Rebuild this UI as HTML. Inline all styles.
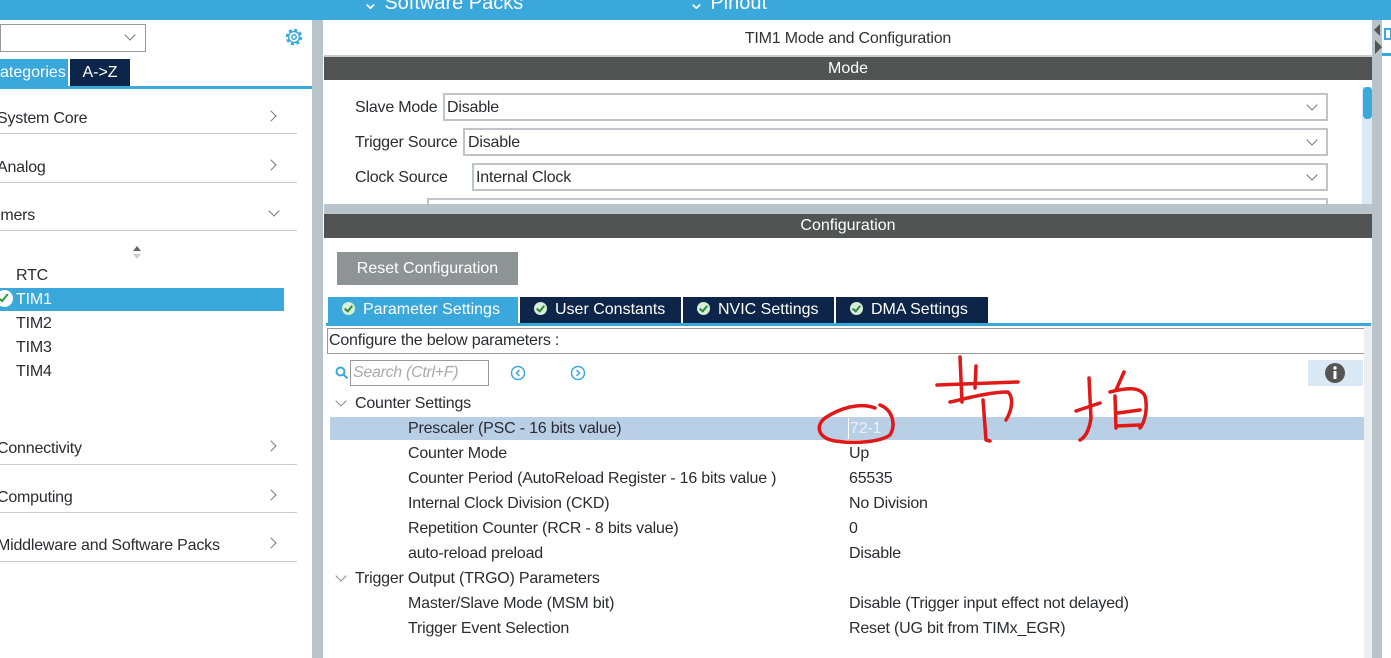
<!DOCTYPE html>
<html><head><meta charset="utf-8"><style>
*{margin:0;padding:0;box-sizing:border-box}
body{width:1391px;height:658px;overflow:hidden;background:#fff;font-family:"Liberation Sans","Noto Sans CJK SC",sans-serif;font-size:16px;color:#2b2b33;position:relative}
.a{position:absolute;white-space:nowrap}
.t{position:absolute;white-space:nowrap;line-height:18px;letter-spacing:-0.2px}
.sel{position:absolute;border:2px solid #c0c4c8;background:#fff;height:28px}
.hline{position:absolute;height:1px;background:#c8ccd0}
.chev{position:absolute;width:8px;height:8px;border-right:1.5px solid #777;border-bottom:1.5px solid #777}
.tab{position:absolute;top:297px;height:26px;background:#0c2548;color:#fff;line-height:26px;font-size:16px}
.ck{display:inline-block;width:13px;height:13px;border-radius:50%;background:#d8eed8;vertical-align:-1px;margin:0 8px 0 14px;position:relative}
.ck:after{content:"";position:absolute;left:4px;top:2px;width:3px;height:6px;border-right:2px solid #2a8a3a;border-bottom:2px solid #2a8a3a;transform:rotate(40deg)}
</style></head><body>
<!-- top bar -->
<div class="a" style="left:0;top:0;width:1391px;height:20px;background:#3aa8db"></div>
<div class="a" style="left:362px;top:-9px;color:#fff;font-size:20px;line-height:24px">⌄ Software Packs</div>
<div class="a" style="left:688px;top:-9px;color:#fff;font-size:20px;line-height:24px">⌄ Pinout</div>

<!-- left panel -->
<div class="a" style="left:0;top:24px;width:146px;height:28px;border:1px solid #999;background:#fff"></div>
<div class="chev" style="left:126px;top:31px;transform:rotate(45deg)"></div>
<svg class="a" style="left:284px;top:27px" width="20" height="20" viewBox="0 0 20 20"><circle cx="10" cy="10" r="7" fill="none" stroke="#3aa8db" stroke-width="2.5" stroke-dasharray="3 2.5"/><circle cx="10" cy="10" r="5.5" fill="none" stroke="#3aa8db" stroke-width="1.5"/><circle cx="10" cy="10" r="2.2" fill="none" stroke="#3aa8db" stroke-width="1.5"/></svg>
<div class="a" style="left:0;top:59px;width:68px;height:28px;background:#3aa8db;color:#fff;line-height:28px;font-size:16px">ategories</div>
<div class="a" style="left:70px;top:59px;width:60px;height:28px;background:#0c2548;color:#fff;line-height:28px;text-align:center;font-size:16px">A-&gt;Z</div>
<div class="a" style="left:0;top:86px;width:312px;height:3px;background:#3aa8db"></div>

<div class="t" style="left:-3px;top:110px">System Core</div><div class="chev" style="left:267px;top:112px;transform:rotate(-45deg)"></div><div class="hline" style="left:0;top:133px;width:297px"></div>
<div class="t" style="left:-3px;top:159px">Analog</div><div class="chev" style="left:267px;top:161px;transform:rotate(-45deg)"></div><div class="hline" style="left:0;top:182px;width:297px"></div>
<div class="t" style="left:-3px;top:207px">imers</div><div class="chev" style="left:270px;top:207px;transform:rotate(45deg)"></div><div class="hline" style="left:0;top:230px;width:297px"></div>
<div class="a" style="left:133px;top:246px;width:0;height:0;border:4px solid transparent;border-bottom:5px solid #666;border-top:0"></div>
<div class="a" style="left:133px;top:254px;width:0;height:0;border:4px solid transparent;border-top:5px solid #ccc;border-bottom:0"></div>
<div class="t" style="left:16px;top:267px">RTC</div>
<div class="a" style="left:0;top:288px;width:284px;height:23px;background:#3aa8db"></div>
<div class="a" style="left:-4px;top:290px;width:17px;height:17px;border-radius:50%;background:#fff"></div>
<div class="a" style="left:1px;top:292px;width:5px;height:10px;border-right:2px solid #2a9a3a;border-bottom:2px solid #2a9a3a;transform:rotate(40deg)"></div>
<div class="t" style="left:16px;top:291px;color:#fff">TIM1</div>
<div class="t" style="left:16px;top:315px">TIM2</div>
<div class="t" style="left:16px;top:339px">TIM3</div>
<div class="t" style="left:16px;top:363px">TIM4</div>
<div class="t" style="left:-3px;top:440px">Connectivity</div><div class="chev" style="left:267px;top:442px;transform:rotate(-45deg)"></div><div class="hline" style="left:0;top:464px;width:297px"></div>
<div class="t" style="left:-3px;top:489px">Computing</div><div class="chev" style="left:267px;top:491px;transform:rotate(-45deg)"></div><div class="hline" style="left:0;top:512px;width:297px"></div>
<div class="t" style="left:-3px;top:537px">Middleware and Software Packs</div><div class="chev" style="left:267px;top:539px;transform:rotate(-45deg)"></div><div class="hline" style="left:0;top:561px;width:297px"></div>

<!-- separator -->
<div class="a" style="left:312px;top:20px;width:11px;height:638px;background:#b9c4ca"></div>
<div class="a" style="left:1372px;top:20px;width:10px;height:638px;background:#b9c4ca"></div>
<div class="a" style="left:1374px;top:24px;width:0;height:0;border:6px solid transparent;border-right:6px solid #555;border-left:0"></div>
<div class="a" style="left:1375px;top:40px;width:0;height:0;border:7px solid transparent;border-left:7px solid #555;border-right:0"></div>
<div class="a" style="left:1384px;top:28px;width:8px;height:12px;border:2px solid #3aa8db"></div>
<div class="a" style="left:1382px;top:53px;width:9px;height:3px;background:#3aa8db"></div>

<!-- mode section -->
<div class="a" style="left:324px;top:30px;width:1048px;text-align:center;font-size:16px;color:#333;line-height:18px;letter-spacing:-0.2px">TIM1 Mode and Configuration</div>
<div class="a" style="left:324px;top:55px;width:1048px;height:2px;background:#ccc"></div>
<div class="a" style="left:324px;top:57px;width:1048px;height:23px;background:#525453;color:#fff;text-align:center;line-height:23px">Mode</div>
<div class="t" style="left:355px;top:99px">Slave Mode</div>
<div class="sel" style="left:443px;top:93px;width:885px"></div><div class="t" style="left:447px;top:99px">Disable</div><div class="chev" style="left:1308px;top:101px;transform:rotate(45deg)"></div>
<div class="t" style="left:355px;top:134px">Trigger Source</div>
<div class="sel" style="left:463px;top:128px;width:865px"></div><div class="t" style="left:468px;top:134px">Disable</div><div class="chev" style="left:1308px;top:136px;transform:rotate(45deg)"></div>
<div class="t" style="left:355px;top:169px">Clock Source</div>
<div class="sel" style="left:472px;top:163px;width:856px"></div><div class="t" style="left:476px;top:169px">Internal Clock</div><div class="chev" style="left:1308px;top:171px;transform:rotate(45deg)"></div>
<div class="sel" style="left:427px;top:198px;width:901px;height:8px;border-bottom:0"></div>
<div class="a" style="left:1362px;top:87px;width:10px;height:117px;background:#dbe8f5"></div>
<div class="a" style="left:1363px;top:87px;width:9px;height:32px;background:#3aa8db;border-radius:4px"></div>

<!-- config -->
<div class="a" style="left:324px;top:204px;width:1048px;height:10px;background:#b9c4ca"></div>
<div class="a" style="left:324px;top:214px;width:1048px;height:24px;background:#525453;color:#fff;text-align:center;line-height:24px">Configuration</div>
<div class="a" style="left:337px;top:252px;width:181px;height:33px;background:#8e9396;color:#fff;text-align:center;line-height:33px">Reset Configuration</div>
<div class="tab" style="left:328px;width:190px;background:#3aa8db"><span class="ck"></span>Parameter Settings</div>
<div class="tab" style="left:520px;width:161px"><span class="ck"></span>User Constants</div>
<div class="tab" style="left:683px;width:151px"><span class="ck"></span>NVIC Settings</div>
<div class="tab" style="left:836px;width:152px"><span class="ck"></span>DMA Settings</div>
<div class="a" style="left:326px;top:323px;width:1045px;height:3px;background:#3aa8db"></div>
<div class="a" style="left:327px;top:328px;width:1042px;height:26px;border:1px solid #999;line-height:24px;padding-left:1px;letter-spacing:-0.2px">Configure the below parameters :</div>
<svg class="a" style="left:335px;top:366px" width="14" height="14"><circle cx="5.5" cy="5.5" r="4" fill="none" stroke="#3aa8db" stroke-width="2"/><line x1="8.5" y1="8.5" x2="12.5" y2="12.5" stroke="#3aa8db" stroke-width="2"/></svg>
<div class="a" style="left:350px;top:360px;width:139px;height:26px;border:1px solid #999;color:#aaa;font-style:italic;line-height:24px;padding-left:2px;letter-spacing:-0.3px">Search (Ctrl+F)</div>
<svg class="a" style="left:510px;top:365px" width="16" height="16"><circle cx="8" cy="8" r="6.5" fill="none" stroke="#3aa8db" stroke-width="1.5"/><path d="M9.5 5 L6.5 8 L9.5 11" fill="none" stroke="#3aa8db" stroke-width="1.5"/></svg>
<svg class="a" style="left:570px;top:365px" width="16" height="16"><circle cx="8" cy="8" r="6.5" fill="none" stroke="#3aa8db" stroke-width="1.5"/><path d="M6.5 5 L9.5 8 L6.5 11" fill="none" stroke="#3aa8db" stroke-width="1.5"/></svg>
<div class="a" style="left:1308px;top:360px;width:55px;height:26px;background:#dbe8f5"></div>
<svg class="a" style="left:1325px;top:363px" width="20" height="20"><circle cx="10" cy="10" r="10" fill="#555"/><rect x="8.5" y="8" width="3" height="8" fill="#fff"/><circle cx="10" cy="5" r="1.7" fill="#fff"/></svg>

<div class="a" style="left:330px;top:417px;width:1034px;height:23px;background:#b8cfe6"></div>
<div class="chev" style="left:337px;top:397px;transform:rotate(45deg);border-color:#888"></div>
<div class="t" style="left:355px;top:395px">Counter Settings</div>
<div class="t" style="left:408px;top:420px">Prescaler (PSC - 16 bits value)</div>
<div class="a" style="left:848px;top:418px;width:1px;height:21px;background:#fff"></div>
<div class="t" style="left:850px;top:420px;color:#eef">72-1</div>
<div class="t" style="left:408px;top:445px">Counter Mode</div><div class="t" style="left:849px;top:445px">Up</div>
<div class="t" style="left:408px;top:470px">Counter Period (AutoReload Register - 16 bits value )</div><div class="t" style="left:849px;top:470px">65535</div>
<div class="t" style="left:408px;top:495px">Internal Clock Division (CKD)</div><div class="t" style="left:849px;top:495px">No Division</div>
<div class="t" style="left:408px;top:520px">Repetition Counter (RCR - 8 bits value)</div><div class="t" style="left:849px;top:520px">0</div>
<div class="t" style="left:408px;top:545px">auto-reload preload</div><div class="t" style="left:849px;top:545px">Disable</div>
<div class="chev" style="left:337px;top:572px;transform:rotate(45deg);border-color:#888"></div>
<div class="t" style="left:355px;top:570px">Trigger Output (TRGO) Parameters</div>
<div class="t" style="left:408px;top:595px">Master/Slave Mode (MSM bit)</div><div class="t" style="left:849px;top:595px">Disable (Trigger input effect not delayed)</div>
<div class="t" style="left:408px;top:620px">Trigger Event Selection</div><div class="t" style="left:849px;top:620px">Reset (UG bit from TIMx_EGR)</div>
<div class="a" style="left:1364px;top:326px;width:8px;height:332px;background:#eceff1"></div>

<!-- red handwriting -->
<svg class="a" style="left:800px;top:340px" width="360" height="110" viewBox="0 0 360 110" fill="none" stroke="#e01818" stroke-width="3.5" stroke-linecap="round" stroke-linejoin="round">
<path d="M75 68 C60 62 40 68 25 78 C15 86 18 98 35 101 C55 104 80 102 90 95 C96 85 93 70 80 65"/>
<path d="M137 45 L218 42"/>
<path d="M160 17 L162 62"/>
<path d="M176 26 L175 48"/>
<path d="M150 62 C168 58 190 52 208 52 C214 58 212 70 206 80"/>
<path d="M183 60 L186 100 L190 101"/>
<path d="M276 71 L300 63"/>
<path d="M289 38 L291 78 C289 92 284 98 280 100"/>
<path d="M324 32 L316 50"/>
<path d="M310 52 C325 48 340 46 345 56 C348 68 345 82 340 88"/>
<path d="M315 56 L316 88"/>
<path d="M318 73 L340 70"/>
<path d="M316 86 L340 85"/>
</svg>
</body></html>
